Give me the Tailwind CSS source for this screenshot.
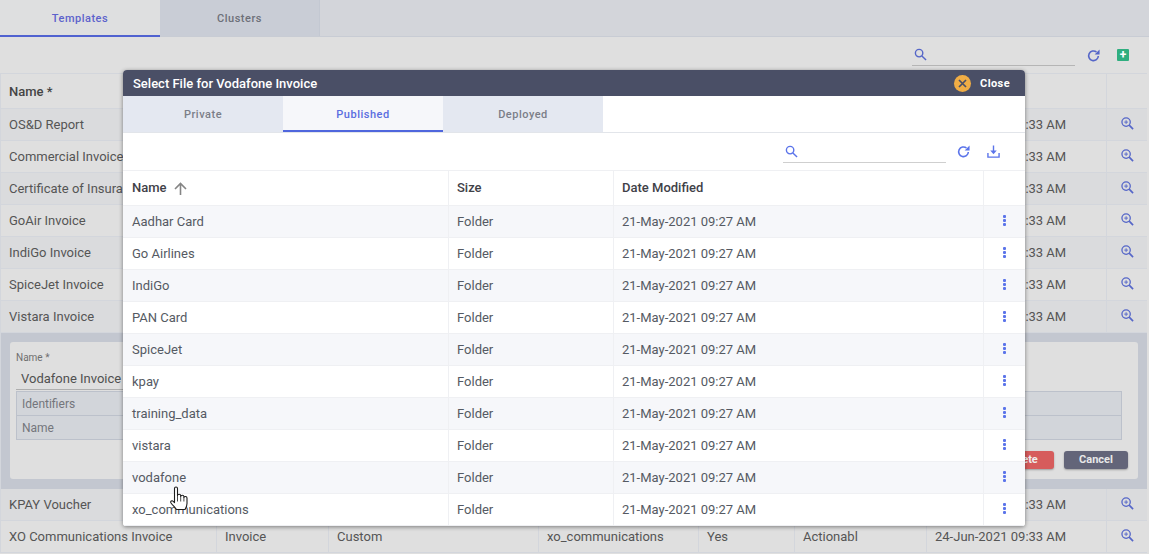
<!DOCTYPE html>
<html lang="en">
<head>
  <meta charset="UTF-8" />
  <title>Templates</title>
  <script src="https://cdn.jsdelivr.net/npm/@tailwindcss/browser@4"></script>
</head>
<body class="relative w-[1149px] h-[554px] overflow-hidden bg-[#dfdfdf] font-['Roboto',sans-serif] text-[13px] text-[#555555]">
  <!-- page behind the dialog -->
  <div class="flex h-[37px] border-b border-[#c8ccd4] bg-[#d3d5da]">
    <div class="w-[160px] h-[37px] pt-[4px] flex items-center justify-center bg-[#dedfe0] border-b-[2px] border-[#5062d0] text-[11px] font-medium tracking-[0.5px] text-[#5c62cc]">Templates</div>
    <div class="w-[160px] pt-[3px] flex items-center justify-center bg-[#c9cdd6] border-r border-[#c3c8d2] text-[11px] font-medium tracking-[0.5px] text-[#6d7079]">Clusters</div>
  </div>
  <div class="flex h-[36px] items-start justify-end pt-[7px]">
    <div class="w-[163px] h-[22px] mr-[12px] border-b border-[#b5b5b5] pl-[2px] pt-[4px]">
      <svg class="block w-[13px] h-[13px]" viewBox="0 0 14 14" fill="none" stroke="#5566c8" stroke-width="1.5"><circle cx="5.500" cy="5.500" r="4"/><path d="M8.500 8.500 13 13"/></svg>
    </div>
    <svg class="w-[13px] h-[13px] mt-[5px] mr-[17px]" viewBox="0 0 14 14" fill="none" stroke="#5566c8" stroke-width="1.700"><path d="M12.200 7.500A5.200 5.200 0 1 1 10.200 3.200"/><path d="M8.200 5.800h5.300V.5z" fill="#5566c8" stroke="none"/></svg>
    <div class="w-[12px] h-[12px] mt-[5px] mr-[20px] rounded-[1px] bg-[#2fae7f] flex items-center justify-center text-white font-bold text-[12px] leading-none">+</div>
  </div>
  <div id="back" class="w-[1147px] border-l border-[#d3d6dc]"></div>

  <!-- dialog -->
  <div class="absolute left-[123px] top-[70px] w-[902px] h-[456px] bg-white rounded-t-[4px] rounded-b-[3px] shadow-[0_1px_4px_rgba(0,0,0,0.45)] overflow-hidden">
    <div class="h-[26px] bg-[#4a4f66] flex items-center pl-[10px] pr-[15px] text-white">
      <span class="font-medium text-[13px] leading-none">Select File for Vodafone Invoice</span>
      <div class="ml-auto w-[17px] h-[17px] rounded-full bg-[#f0ad45] flex items-center justify-center">
        <svg class="w-[9px] h-[9px]" viewBox="0 0 9 9" fill="none" stroke="#4a4f66" stroke-width="1.7"><path d="M1 1l7 7M8 1 1 8"/></svg>
      </div>
      <span class="ml-[9px] pt-[2px] font-bold text-[11px] tracking-[0.4px]">Close</span>
    </div>
    <div class="flex h-[37px] border-b border-[#e2e5ea]">
      <div class="w-[160px] h-[36px] pt-[3px] flex items-center justify-center bg-[#e4e8f1] text-[11px] font-medium tracking-[0.5px] text-[#7b7e88]">Private</div>
      <div class="w-[160px] h-[36px] pt-[4px] flex items-center justify-center bg-[#f6f7fa] border-b-[2px] border-[#4f66dd] text-[11px] font-medium tracking-[0.5px] text-[#5a6ee0]">Published</div>
      <div class="w-[160px] h-[36px] pt-[3px] flex items-center justify-center bg-[#e4e8f1] text-[11px] font-medium tracking-[0.5px] text-[#7b7e88]">Deployed</div>
    </div>
    <div class="flex h-[37px] items-start justify-end pt-[9px]">
      <div class="w-[163px] h-[21px] mr-[11px] border-b border-[#cfcfcf] pl-[2px] pt-[3px]">
        <svg class="block w-[13px] h-[13px]" viewBox="0 0 14 14" fill="none" stroke="#5b74ea" stroke-width="1.5"><circle cx="5.500" cy="5.500" r="4"/><path d="M8.500 8.500 13 13"/></svg>
      </div>
      <svg class="w-[13px] h-[13px] mt-[3px] mr-[17px]" viewBox="0 0 14 14" fill="none" stroke="#5b74ea" stroke-width="1.700"><path d="M12.200 7.500A5.200 5.200 0 1 1 10.200 3.200"/><path d="M8.200 5.800h5.300V.5z" fill="#5b74ea" stroke="none"/></svg>
      <svg class="w-[13px] h-[13px] mt-[3px] mr-[25px]" viewBox="0 0 14 14" fill="none" stroke="#5b74ea" stroke-width="1.500"><path d="M1 8.500v4.500h12V8.500"/><path d="M7 .5v6"/><path d="M3.500 6h7L7 10z" fill="#5b74ea" stroke="none"/></svg>
    </div>
    <div class="grid grid-cols-[326px_165px_370px_1fr] h-[36px] border-t border-b border-[#eff0f3] items-stretch text-[13px] font-medium text-[#3f4148]">
      <div class="flex items-center pl-[9px] border-r border-[#eff0f3]"><span>Name</span>
        <svg class="w-[13px] h-[13px] ml-[7px]" viewBox="0 0 13 13" fill="none" stroke="#858585" stroke-width="1.600"><path d="M6.500 13V1.500M1 7l5.500-5.500L12 7"/></svg>
      </div>
      <div class="flex items-center pl-[8px] border-r border-[#eff0f3]">Size</div>
      <div class="flex items-center pl-[8px] border-r border-[#eff0f3]">Date Modified</div>
      <div></div>
    </div>
    <div id="files"></div>
  </div>

  <!-- hand cursor -->
  <svg class="absolute left-[170px] top-[486px] w-[19px] h-[25px]" viewBox="0 0 19 25" fill="#fff" stroke="#1c1c1c" stroke-width="1.100" stroke-linejoin="round"><path d="M4.500 2.500c0-2 3-2 3 0V9.500c0-1.600 3.200-1.600 3.200 0v1c0-1.600 3.200-1.600 3.200 0v1c0-1.500 3.100-1.500 3.100.5v5.500c0 2.700-1 4.500-2 6H6.500c-1.500-2-3.500-4-5.500-6.500-1-1.600.9-3 2.200-1.700l1.300 1.300z"/><path d="M7.500 9.500v6M10.700 10.500v5M13.900 11.500v4" stroke-width="0.800"/></svg>

  <script>
    const zoomIcon = '<svg class="w-[13px] h-[13px] mb-[2px]" viewBox="0 0 14 14" fill="none" stroke="#5566c8" stroke-width="1.400"><circle cx="5.500" cy="5.500" r="4.500"/><path d="M8.800 8.800 13 13" stroke-width="1.800"/><path d="M3.500 5.500h4M5.500 3.500v4" stroke-width="1"/></svg>';

    function backRow(cells, dark) {
      return `<div class="grid grid-cols-[216px_112px_210px_160px_96px_132px_180px_1fr] h-[32px] border-b border-[#d3d6dc] ${dark ? 'bg-[#dadbdd]' : 'bg-[#dfdfdf]'}">
        ${cells.map(c => `<div class="flex items-center pl-[8px] border-r border-[#d3d6dc] whitespace-nowrap overflow-hidden">${c}</div>`).join('')}
        <div class="flex items-center justify-center">${zoomIcon}</div>
      </div>`;
    }

    const names = ['OS&amp;D Report', 'Commercial Invoice', 'Certificate of Insurance', 'GoAir Invoice', 'IndiGo Invoice', 'SpiceJet Invoice', 'Vistara Invoice'];
    const date = '24-Jun-2021 09:33 AM';
    let html = `<div class="grid grid-cols-[1106px_1fr] h-[36px] border-t border-b border-[#d3d6dc] bg-[#dfdfdf]">
      <div class="flex items-center pl-[8px] pt-[2px] border-r border-[#d3d6dc] font-medium text-[13px] text-[#454545]">Name *</div><div></div>
    </div>`;
    names.forEach((n, i) => { html += backRow([n, '', '', '', '', '', date], i % 2 === 0); });

    html += `<div class="h-[156px] bg-[#c3c7d0] pt-[9px] pr-[9px] pl-[9px]">
      <div class="h-[137px] bg-[#dfdfdf] rounded-[3px] relative pl-[6px] pt-[10px]">
        <div class="text-[10px] text-[#6f6f6f] leading-[12px]">Name *</div>
        <div class="mt-[5px] h-[21px] w-[300px] pl-[5px] flex items-center border-b border-[#aeaeae] text-[13px] text-[#505050]">Vodafone Invoice</div>
        <div class="mt-[1px] w-[1106px] border border-[#bcc1cb] bg-[#d2d5da] text-[12px] text-[#74767c]">
          <div class="h-[24px] pl-[5px] flex items-center border-b border-[#bcc1cb]">Identifiers</div>
          <div class="h-[23px] pl-[5px] flex items-center">Name</div>
        </div>
        <div class="absolute right-[10px] bottom-[10px] flex gap-[10px]">
          <button class="w-[64px] h-[18px] rounded-[3px] bg-[#d65c5c] text-[#eee] text-[11px] font-bold shadow-[0_1px_2px_rgba(0,0,0,0.3)]">Delete</button>
          <button class="w-[64px] h-[18px] rounded-[3px] bg-[#636579] text-[#e8e8e8] text-[11px] font-bold shadow-[0_1px_2px_rgba(0,0,0,0.3)]">Cancel</button>
        </div>
      </div>
    </div>`;
    html += backRow(['KPAY Voucher', '', '', '', '', '', date], true);
    html += backRow(['XO Communications Invoice', 'Invoice', 'Custom', 'xo_communications', 'Yes', 'Actionabl', date], false);
    document.getElementById('back').innerHTML = html;

    const folders = ['Aadhar Card', 'Go Airlines', 'IndiGo', 'PAN Card', 'SpiceJet', 'kpay', 'training_data', 'vistara', 'vodafone', 'xo_communications'];
    document.getElementById('files').innerHTML = folders.map((f, i) => `
      <div class="grid grid-cols-[326px_165px_370px_1fr] h-[32px] border-b border-[#eff0f3] text-[#555a63] ${i % 2 === 0 ? 'bg-[#f6f7fa]' : 'bg-white'}">
        <div class="flex items-center pl-[9px] border-r border-[#eff0f3]">${f}</div>
        <div class="flex items-center pl-[8px] border-r border-[#eff0f3]">Folder</div>
        <div class="flex items-center pl-[8px] border-r border-[#eff0f3]">21-May-2021 09:27 AM</div>
        <div class="flex flex-col items-center justify-center gap-[1px] pb-[3px]">
          <span class="w-[3px] h-[3px] rounded-[1px] bg-[#5b74ea]"></span><span class="w-[3px] h-[3px] rounded-[1px] bg-[#5b74ea]"></span><span class="w-[3px] h-[3px] rounded-[1px] bg-[#5b74ea]"></span>
        </div>
      </div>`).join('');
  </script>
</body>
</html>
